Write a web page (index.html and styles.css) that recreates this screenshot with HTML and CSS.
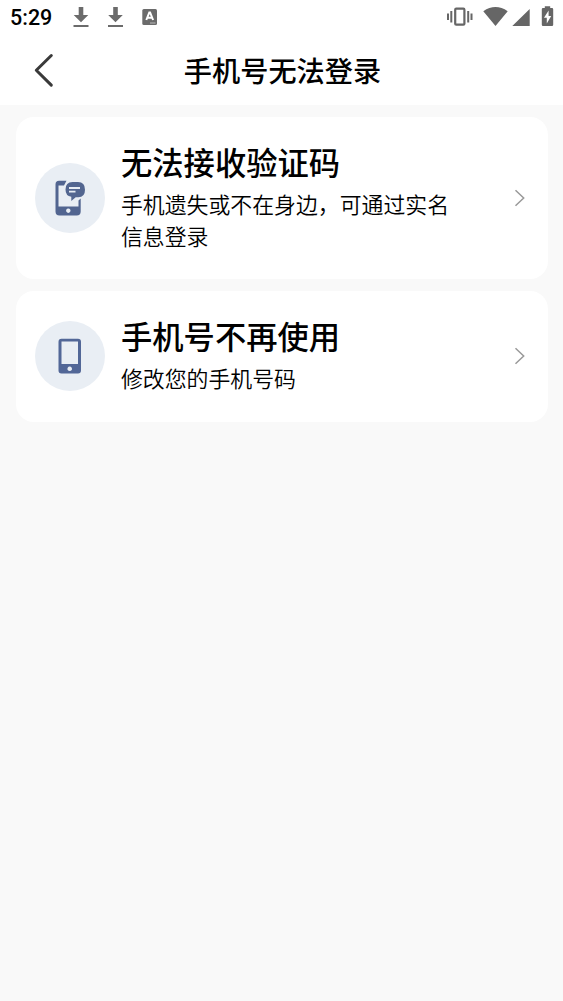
FILE: index.html
```html
<!DOCTYPE html>
<html lang="zh-CN">
<head>
<meta charset="utf-8">
<title>手机号无法登录</title>
<link rel="stylesheet" href="styles.css">
</head>
<body>
<header class="top">
  <div class="status">
    <span class="clock">5:29</span>
    <svg class="notices" width="90" height="34" viewBox="70 0 90 34" fill="#6b6b6b">
      <path d="M78.700 7h4.600v8h5L81 22.300 73.700 15h5zM73.500 25h15v2h-15z"/>
      <path d="M113.200 7h4.600v8h5l-7.300 7.300-7.300-7.300h5zM108 25h15v2h-15z"/>
      <rect x="142.300" y="9" width="14.700" height="16" rx="1.500"/>
      <path d="M146.300 20l3-7.500h.8l3 7.500M147.300 17.800h4.700" fill="none" stroke="#fff" stroke-width="2"/>
      <path d="M150 23h5.500" stroke="#bbb" stroke-width="1"/>
    </svg>
    <svg class="system" width="113" height="34" viewBox="445 0 113 34" fill="#666">
      <path d="M447 13.500h2v6.500h-2zM450.300 11h2v11.500h-2zM467.200 11h2v11.500h-2zM470.500 13.500h2v6.500h-2z"/>
      <rect x="455.200" y="8.700" width="9.200" height="16" rx="1" fill="none" stroke="#666" stroke-width="2.200"/>
      <path d="M483.300 11.200Q495.500 3 507.700 11.200L495.500 26zM529.700 9v17h-17.400z"/>
      <path fill-rule="evenodd" d="M544.800 8V6.300h5.400V8H552q1.200 0 1.200 1.200v15.600q0 1.200-1.200 1.200h-9q-1.200 0-1.200-1.200V9.200Q541.800 8 543 8zM548.600 10.500l-4.600 7.200h2.800v5.700l4.400-7.400h-2.600z"/>
    </svg>
  </div>
  <div class="nav">
    <svg class="back" width="22" height="36" viewBox="0 0 22 36"><path d="M19.300 3.500 4.300 18.300l15 14.800"/></svg>
    <h1 class="heading">手机号无法登录</h1>
  </div>
</header>
<main class="list">
  <section class="card card-tall">
    <span class="badge">
      <svg width="70" height="70" viewBox="0 0 70 70">
        <path fill="#526590" fill-rule="evenodd" d="M24 17.800H31.500L29 22.500H23.500V43.500H43.500V37.500L45.700 35.500V48.500Q45.700 52.500 41.700 52.500H24.500Q20.500 52.500 20.500 48.500V21.500Q20.500 17.800 24 17.800zM33.300 45.500a2.200 2.200 0 1 0 .01 0z"/>
        <path fill="#536690" d="M37.500 19h5.500q7 0 7 7.700t-7 7.500h-2.300L36.300 38v-4.200Q30.500 33 30.500 26.500q0-7.500 7-7.500z"/>
        <path d="M34 25h11M34 28.700h6.500" stroke="#e8edf4" stroke-width="1.800"/>
      </svg>
    </span>
    <div class="copy">
      <h2 class="name">无法接收验证码</h2>
      <p class="detail">手机遗失或不在身边，可通过实名信息登录</p>
    </div>
    <svg class="arrow" width="12" height="18" viewBox="0 0 12 18"><path d="M1.500 1.200 9.700 9 1.500 16.800"/></svg>
  </section>
  <section class="card card-short">
    <span class="badge">
      <svg width="70" height="70" viewBox="0 0 70 70">
        <path fill="#526797" fill-rule="evenodd" d="M26.500 17.800H43Q46 17.800 46 20.800V49.500Q46 52.500 43 52.500H26.500Q23.500 52.500 23.500 49.500V20.800Q23.500 17.800 26.500 17.800zM26.500 20.500V43H43V20.500zM34.700 45.500a2.300 2.300 0 1 0 .01 0z"/>
      </svg>
    </span>
    <div class="copy">
      <h2 class="name">手机号不再使用</h2>
      <p class="detail">修改您的手机号码</p>
    </div>
    <svg class="arrow" width="12" height="18" viewBox="0 0 12 18"><path d="M1.500 1.200 9.700 9 1.500 16.800"/></svg>
  </section>
</main>
</body>
</html>
```
FILE: styles.css
```css
* { box-sizing: border-box; }
body {
  margin: 0;
  min-height: 1001px;
  background: #f9f9f9;
  color: #000;
  font-family: "Noto Sans CJK SC", sans-serif;
}
h1, h2, p { margin: 0; }
svg { display: block; flex: none; }
.top { height: 105px; background: #fff; }
.status { display: flex; height: 34px; padding: 0 5px 0 10px; }
.clock {
  width: 60px;
  font: 500 21.500px/36px Roboto, sans-serif;
}
.system { margin-left: auto; }
.nav {
  display: grid;
  grid-template-columns: 32px 22px 1fr 52px;
  align-items: center;
  height: 72px;
}
.back {
  grid-column: 2;
  fill: none;
  stroke: #3a3a3a;
  stroke-width: 3;
  stroke-linecap: round;
  stroke-linejoin: round;
}
.heading {
  text-align: center;
  font-size: 28.200px;
  font-weight: 500;
  line-height: 40px;
}
.list { display: grid; gap: 12.500px; padding: 12px 15px 0 16px; }
.card {
  display: flex;
  align-items: center;
  gap: 16px;
  padding: 0 22px 0 19px;
  border-radius: 18px;
  background: #fff;
}
.card-tall { height: 161.500px; }
.card-short { height: 130.500px; }
.badge {
  flex: none;
  width: 70px;
  height: 70px;
  border-radius: 50%;
  background: #e9eef4;
}
.copy { width: 340px; padding-bottom: 5px; }
.name { font-size: 31.300px; font-weight: 500; line-height: 46px; }
.detail { font-size: 21.880px; font-weight: 350; line-height: 32px; padding-top: 3px; }
.arrow {
  margin-left: auto;
  fill: none;
  stroke: #999;
  stroke-width: 1.500;
}
```
